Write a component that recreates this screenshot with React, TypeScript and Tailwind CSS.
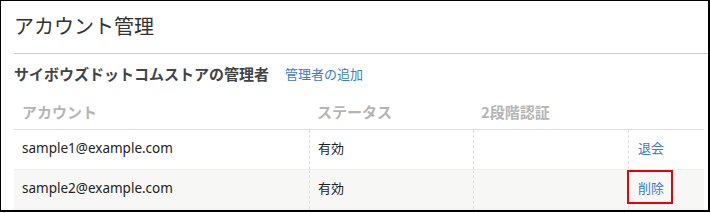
import React from 'react';

const jp = "font-['Noto_Sans_CJK_JP',sans-serif]";
const latin = "font-['Noto_Sans','Noto_Sans_CJK_JP',sans-serif]";

type Row = { email: string; status: string; action: string; marked?: boolean };

const rows: Row[] = [
  { email: 'sample1@example.com', status: '有効', action: '退会' },
  { email: 'sample2@example.com', status: '有効', action: '削除', marked: true },
];

const cols = 'grid grid-cols-[295px_164px_155px_76px]';

const App: React.FC = () => {
  return (
    <div className="w-[710px] h-[212px] bg-white border-black border-l border-t border-r-2 border-b-2 overflow-hidden">
      {/* page title */}
      <div className={`${jp} pl-[13px] pt-[11px] h-[40px] text-[20px] leading-[28px] text-[#333]`}>
        アカウント管理
      </div>
      <div className="ml-[13px] mt-[12px] h-px bg-[#cccccc]" />

      {/* section heading */}
      <div className={`${jp} flex items-center pl-[13px] mt-[9px] h-[22px]`}>
        <span className="text-[15px] font-bold text-[#444]">サイボウズドットコムストアの管理者</span>
        <a className="ml-[16px] text-[13px] text-[#3b7cc9]">管理者の追加</a>
      </div>

      {/* table */}
      <div className="ml-[13px] mt-[10px] w-[690px]">
        <div className={`${cols} ${jp} h-[35px] items-center border-b border-[#dddddd] text-[15px] font-bold text-[#b5b5b5]`}>
          <div className="pl-[8px]">アカウント</div>
          <div className="pl-[8px]">ステータス</div>
          <div className="pl-[8px]">2段階認証</div>
          <div />
        </div>
        {rows.map((r, i) => (
          <div
            key={r.email}
            className={`${cols} h-[40px] border-b border-[#eeeeee] ${i % 2 ? 'bg-[#f7f7f5]' : 'bg-white'}`}
          >
            <div className={`${latin} flex items-center pl-[8px] pb-[3px] text-[13.5px] text-[#222]`}>{r.email}</div>
            <div className={`${jp} flex items-center pl-[8px] pb-[3px] text-[13px] text-[#222] border-l border-dashed border-[#dddddd]`}>
              {r.status}
            </div>
            <div className="border-l border-dashed border-[#dddddd]" />
            <div className={`${jp} relative flex items-center pl-[9px] pb-[3px] text-[13px] text-[#3b7cc9] border-l border-dashed border-[#dddddd]`}>
              <a>{r.action}</a>
              {r.marked && (
                <div className="absolute left-[-2px] top-0 w-[46px] h-[34px] border-2 border-[#e8000b]" />
              )}
            </div>
          </div>
        ))}
      </div>
    </div>
  );
};

export default App;
